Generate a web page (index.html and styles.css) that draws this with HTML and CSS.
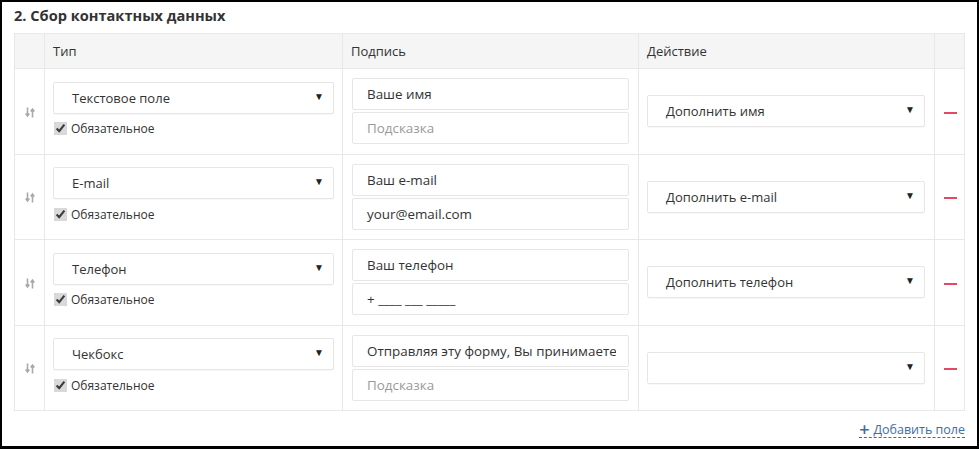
FILE: index.html
```html
<!DOCTYPE html>
<html lang="ru">
<head>
<meta charset="utf-8">
<link rel="stylesheet" href="styles.css">
</head>
<body>
<div class="frame">
  <h2 class="title">2. Сбор контактных данных</h2>
  <table class="fields">
    <colgroup>
      <col class="c-sort"><col class="c-type"><col class="c-label"><col class="c-action"><col class="c-del">
    </colgroup>
    <thead>
      <tr><th></th><th>Тип</th><th>Подпись</th><th>Действие</th><th></th></tr>
    </thead>
    <tbody>
      <tr>
        <td class="sort"><svg width="10" height="11" viewBox="0 0 10 11"><path d="M2.5 0.5v8M0.7 6.6l1.8 2.4 1.8-2.4" fill="none" stroke="#a9a9a9" stroke-width="1.6"/><path d="M7.5 10.5v-8M5.7 4.4l1.8-2.4 1.8 2.4" fill="none" stroke="#a9a9a9" stroke-width="1.6"/></svg></td>
        <td class="type">
          <div class="select"><span>Текстовое поле</span><i class="arrow">▼</i></div>
          <label class="req"><input type="checkbox" checked> Обязательное</label>
        </td>
        <td class="label">
          <div class="input">Ваше имя</div>
          <div class="input ph">Подсказка</div>
        </td>
        <td class="action"><div class="select"><span>Дополнить имя</span><i class="arrow">▼</i></div></td>
        <td class="del"><span class="minus"></span></td>
      </tr>
      <tr>
        <td class="sort"><svg width="10" height="11" viewBox="0 0 10 11"><path d="M2.5 0.5v8M0.7 6.6l1.8 2.4 1.8-2.4" fill="none" stroke="#a9a9a9" stroke-width="1.6"/><path d="M7.5 10.5v-8M5.7 4.4l1.8-2.4 1.8 2.4" fill="none" stroke="#a9a9a9" stroke-width="1.6"/></svg></td>
        <td class="type">
          <div class="select"><span>E-mail</span><i class="arrow">▼</i></div>
          <label class="req"><input type="checkbox" checked> Обязательное</label>
        </td>
        <td class="label">
          <div class="input">Ваш e-mail</div>
          <div class="input">your@email.com</div>
        </td>
        <td class="action"><div class="select"><span>Дополнить e-mail</span><i class="arrow">▼</i></div></td>
        <td class="del"><span class="minus"></span></td>
      </tr>
      <tr>
        <td class="sort"><svg width="10" height="11" viewBox="0 0 10 11"><path d="M2.5 0.5v8M0.7 6.6l1.8 2.4 1.8-2.4" fill="none" stroke="#a9a9a9" stroke-width="1.6"/><path d="M7.5 10.5v-8M5.7 4.4l1.8-2.4 1.8 2.4" fill="none" stroke="#a9a9a9" stroke-width="1.6"/></svg></td>
        <td class="type">
          <div class="select"><span>Телефон</span><i class="arrow">▼</i></div>
          <label class="req"><input type="checkbox" checked> Обязательное</label>
        </td>
        <td class="label">
          <div class="input">Ваш телефон</div>
          <div class="input">+ ____ ___ _____</div>
        </td>
        <td class="action"><div class="select"><span>Дополнить телефон</span><i class="arrow">▼</i></div></td>
        <td class="del"><span class="minus"></span></td>
      </tr>
      <tr>
        <td class="sort"><svg width="10" height="11" viewBox="0 0 10 11"><path d="M2.5 0.5v8M0.7 6.6l1.8 2.4 1.8-2.4" fill="none" stroke="#a9a9a9" stroke-width="1.6"/><path d="M7.5 10.5v-8M5.7 4.4l1.8-2.4 1.8 2.4" fill="none" stroke="#a9a9a9" stroke-width="1.6"/></svg></td>
        <td class="type">
          <div class="select"><span>Чекбокс</span><i class="arrow">▼</i></div>
          <label class="req"><input type="checkbox" checked> Обязательное</label>
        </td>
        <td class="label">
          <div class="input clip"><span class="clip-text">Отправляя эту форму, Вы принимаете условия</span></div>
          <div class="input ph">Подсказка</div>
        </td>
        <td class="action"><div class="select"><span></span><i class="arrow">▼</i></div></td>
        <td class="del"><span class="minus"></span></td>
      </tr>
    </tbody>
  </table>
  <div class="footer"><a class="add" href="#"><span class="plus">+</span> <span class="add-text">Добавить поле</span></a></div>
</div>
</body>
</html>
```
FILE: styles.css
```css
html, body { margin: 0; padding: 0; background: #fff; }
body { font-family: "Open Sans", "Liberation Sans", sans-serif; color: #333; font-size: 13px; }
.frame {
  box-sizing: border-box;
  width: 979px;
  height: 449px;
  border: 2px solid #000;
  border-bottom-width: 3px;
  padding: 0 12px 0 12px;
}
.title {
  margin: 0;
  font-size: 14.6px;
  font-weight: 700;
  line-height: 20px;
  height: 31px;
  padding-top: 3px;
  box-sizing: border-box;
  color: #333;
}
.fields {
  width: 950px;
  border-collapse: collapse;
  table-layout: fixed;
}
.c-sort { width: 30px; }
.c-type { width: 298px; }
.c-label { width: 296px; }
.c-action { width: 296px; }
.c-del { width: 30px; }
.fields th, .fields td { border: 1px solid #e8e8e8; }
.fields th {
  background: #f5f5f5;
  font-weight: 400;
  text-align: left;
  height: 34px;
  padding: 0 8px;
  color: #333;
}
.fields td { height: 84.5px; padding: 0; vertical-align: middle; }
.sort { text-align: center; }
.sort svg { display: block; margin: 0 auto; position: relative; top: 1px; }
.type { padding: 0 8px !important; }
.select {
  box-sizing: border-box;
  height: 32px;
  border: 1px solid #e6e6e6;
  border-radius: 2px;
  display: flex;
  align-items: center;
  justify-content: space-between;
  padding: 0 9px 0 18px;
  color: #333;
  box-shadow: 0 1px 1px rgba(0,0,0,0.03);
}
.arrow { font-style: normal; font-size: 10px; color: #222; position: relative; top: -2px; }
.req {
  display: flex;
  align-items: center;
  height: 16px;
  margin-top: 7px;
  margin-bottom: 4px;
  font-size: 12px;
  color: #333;
}
.req input { margin: 0 4px 0 1px; width: 13px; height: 13px; accent-color: #d9d9d9; filter: grayscale(1); }
.label { padding: 0 9px !important; }
.input {
  box-sizing: border-box;
  height: 32px;
  border: 1px solid #e6e6e6;
  border-radius: 2px;
  display: flex;
  align-items: center;
  padding: 0 14px;
  color: #333;
  font-size: 13.4px;
  white-space: nowrap;
  overflow: hidden;
}
.input + .input { margin-top: 2px; }
.input.ph { color: #999; }
.input.clip { padding-right: 12px; }
.clip-text { display: block; overflow: hidden; max-width: 250px; white-space: nowrap; }
.action { padding: 0 9px 0 8px !important; }
.action .select { padding-left: 18px; }
.del { text-align: center; }
.minus { display: inline-block; width: 13px; height: 2px; background: #e8485f; vertical-align: middle; margin-left: 1px; }
.footer { display: flex; justify-content: flex-end; padding-top: 11px; }
.add { color: #3d6e9f; text-decoration: none; font-size: 12.5px; display: inline-flex; align-items: center; border-bottom: 1px dashed #3d6e9f; line-height: 15px; }
.plus { font-size: 18px; font-weight: 600; margin-right: 4px; line-height: 15px; }
```
